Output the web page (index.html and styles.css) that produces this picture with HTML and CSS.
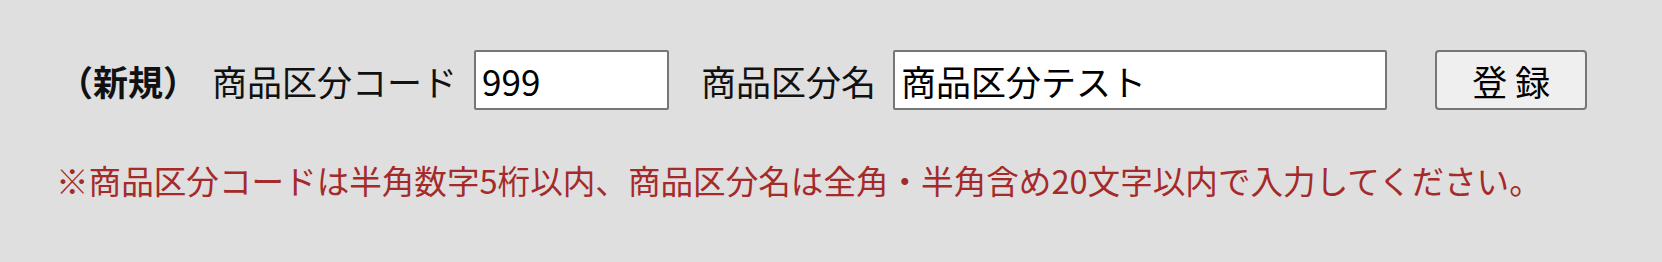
FILE: index.html
```html
<!DOCTYPE html>
<html lang="ja">
<head>
<meta charset="utf-8">
<title>商品区分登録</title>
<link rel="stylesheet" href="styles.css">
</head>
<body>
<div class="page">
  <form class="entry-row">
    <span class="mode">（新規）</span>
    <label class="field-label" for="code">商品区分コード</label>
    <input class="field field-code" id="code" type="text" value="999">
    <label class="field-label label-name" for="name">商品区分名</label>
    <input class="field field-name" id="name" type="text" value="商品区分テスト">
    <button class="submit" type="button">登 録</button>
  </form>
  <p class="note">※商品区分コードは半角数字5桁以内、商品区分名は全角・半角含め20文字以内で入力してください。</p>
</div>
</body>
</html>
```

FILE: styles.css
```css
html, body {
  margin: 0;
  padding: 0;
  background: #dfdfdf;
}

body {
  font-family: "Noto Sans CJK JP", "Noto Sans", sans-serif;
  color: #111;
  width: 1662px;
  height: 262px;
  overflow: hidden;
}

.page {
  padding: 50px 0 0 58px;
}

.entry-row {
  display: flex;
  align-items: center;
  height: 60px;
  margin: 0;
}

.mode {
  font-size: 35px;
  font-weight: bold;
  line-height: 1;
  margin-right: 14px;
}

.field-label {
  font-size: 35px;
  line-height: 1;
  margin-right: 17px;
}

.label-name {
  margin-left: 32px;
  margin-right: 17px;
}

.field {
  box-sizing: border-box;
  height: 60px;
  border: 2px solid #767676;
  border-radius: 2px;
  background: #fff;
  font-family: "Noto Sans CJK JP", "Noto Sans", sans-serif;
  font-size: 35px;
  color: #000;
  padding: 0 6px;
  margin: 0;
  outline: none;
}

.field-code {
  width: 195px;
}

.field-name {
  width: 494px;
}

.submit {
  box-sizing: border-box;
  width: 152px;
  height: 60px;
  margin-left: 48px;
  border: 2px solid #767676;
  border-radius: 4px;
  background: #efefef;
  font-family: "Noto Sans CJK JP", "Noto Sans", sans-serif;
  font-size: 35px;
  line-height: 1;
  color: #000;
  padding: 0;
}

.note {
  margin: 50px 0 0 -2px;
  font-size: 32.6px;
  line-height: 1.25;
  color: #a52a2a;
}
```
